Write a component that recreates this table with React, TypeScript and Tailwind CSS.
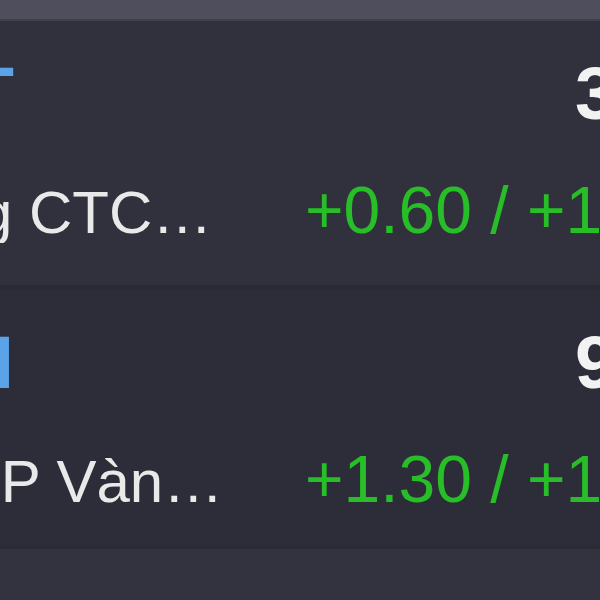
import React from "react";

type Stock = {
  symbol: string;
  name: string;
  price: string;
  change: string;
  namePad: string;
};

const stocks: Stock[] = [
  {
    symbol: "VCT",
    name: "Công ty Cổ phần Xây dựng CTC Việt Nam",
    price: "31.50",
    change: "+0.60 / +1.94%",
    namePad: "pl-[85px]",
  },
  {
    symbol: "PVN",
    name: "Công ty CP Vàng bạc Đá quý Phú Nhuận",
    price: "95.30",
    change: "+1.30 / +1.38%",
    namePad: "pl-[534px]",
  },
];

function Row({ s, bg }: { s: Stock; bg: string }) {
  return (
    <div className={`${bg} flex flex-col pt-[36px] -ml-[800px] w-[1700px]`}>
      <div className="flex h-[74px] items-center text-[74px] leading-none font-bold">
        <span className="w-[814px] shrink-0 text-right text-[#5aa3e6]">{s.symbol}</span>
        <span className="ml-[561px] text-[#f2f2f2]">{s.price}</span>
      </div>
      <div className="mt-[46px] flex items-baseline leading-none">
        <span className={`w-[1026px] shrink-0 truncate text-[60px] ${s.namePad} text-[#e9e9ea]`}>{s.name}</span>
        <span className="ml-[79px] text-[66px] text-[#28be28]">{s.change}</span>
      </div>
    </div>
  );
}

export default function App() {
  return (
    <div className="w-[600px] h-[600px] overflow-hidden bg-[#32323e] font-['Liberation_Sans',Arial,sans-serif] flex flex-col">
      <div className="h-[21px] shrink-0 bg-[#4e4e5c] border-b-2 border-[#3f3f4c]" />
      <div className="h-[264px] shrink-0 overflow-hidden">
        <Row s={stocks[0]} bg="bg-[#31313d] h-[264px]" />
      </div>
      <div className="h-[5px] shrink-0 bg-[#2a2a35]" />
      <div className="h-[256px] shrink-0 overflow-hidden">
        <Row s={stocks[1]} bg="bg-[#2d2d39] h-[256px]" />
      </div>
      <div className="h-[3px] shrink-0 bg-[#2a2a35]" />
      <div className="flex-1 bg-[#33333f]" />
    </div>
  );
}
